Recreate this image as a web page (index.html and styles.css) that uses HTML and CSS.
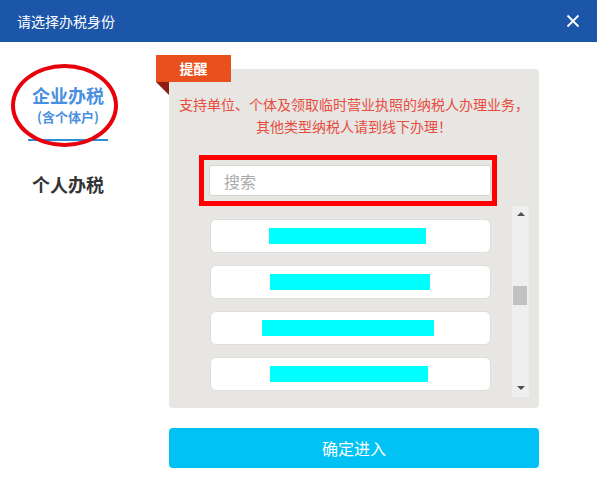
FILE: index.html
```html
<!DOCTYPE html>
<html lang="zh">
<head>
<meta charset="utf-8">
<title>请选择办税身份</title>
<link rel="stylesheet" href="styles.css">
</head>
<body>
<div class="dialog">
  <div class="header">
    <span class="title">请选择办税身份</span>
    <span class="close">
      <svg width="14" height="14" viewBox="0 0 14 14"><path d="M1.5 1.5 L12.5 12.5 M12.5 1.5 L1.5 12.5" stroke="#fff" stroke-width="1.8" fill="none"/></svg>
    </span>
  </div>
  <div class="main">
    <div class="nav">
      <div class="nav-item active">
        <div class="nav-title">企业办税</div>
        <div class="nav-sub">(含个体户)</div>
        <span class="ellipse"></span>
      </div>
      <div class="nav-item">
        <div class="nav-title dark">个人办税</div>
      </div>
    </div>
    <div class="content">
      <div class="panel">
        <div class="tag">提醒</div>
        <p class="notice">支持单位、个体及领取临时营业执照的纳税人办理业务，<br>其他类型纳税人请到线下办理！</p>
        <div class="search">
          <input class="search-input" type="text" placeholder="搜索">
        </div>
        <div class="list-wrap">
          <div class="list">
            <div class="item"><span class="bar" style="width:157px;margin-left:-6px"></span></div>
            <div class="item"><span class="bar" style="width:160px;margin-left:-1px"></span></div>
            <div class="item"><span class="bar" style="width:172px;margin-left:-5px"></span></div>
            <div class="item"><span class="bar" style="width:158px;margin-left:-3px"></span></div>
          </div>
          <div class="scrollbar">
            <span class="arrow up"></span>
            <span class="thumb"></span>
            <span class="arrow down"></span>
          </div>
        </div>
      </div>
      <button class="confirm">确定进入</button>
    </div>
  </div>
</div>
</body>
</html>
```
FILE: styles.css
```css
* { box-sizing: border-box; }
html, body {
  margin: 0;
  padding: 0;
  background: #fff;
  font-family: "Noto Sans CJK SC", "Liberation Sans", sans-serif;
}
.dialog {
  width: 597px;
  height: 494px;
  background: #fff;
}
.header {
  height: 42px;
  background: #1b56a8;
  display: flex;
  align-items: center;
  justify-content: space-between;
  padding: 0 17px 0 17px;
}
.title {
  color: #fff;
  font-size: 14px;
  line-height: 20px;
}
.close {
  display: flex;
  width: 14px;
  height: 14px;
}
.main {
  display: flex;
}
.nav {
  width: 136px;
  display: flex;
  flex-direction: column;
  align-items: center;
}
.nav-item {
  position: relative;
  width: 80px;
  text-align: center;
}
.nav-item.active {
  margin-top: 42px;
  padding-bottom: 13px;
  border-bottom: 2px solid #2a8fd6;
}
.nav-item + .nav-item {
  margin-top: 32px;
}
.nav-title {
  font-size: 18px;
  line-height: 22px;
  font-weight: bold;
  color: #4a8fe0;
}
.nav-title.dark {
  color: #333;
}
.nav-sub {
  font-size: 13px;
  line-height: 18px;
  margin-top: 2px;
  font-weight: bold;
  color: #4a8fe0;
}
.ellipse {
  position: absolute;
  left: -17px;
  top: -20px;
  width: 107px;
  height: 83px;
  border: 4px solid #e8000c;
  border-radius: 50%;
}
.content {
  margin-left: 33px;
  width: 370px;
  padding-top: 27px;
}
.panel {
  position: relative;
  background: #e7e6e3;
  border-radius: 4px;
  padding: 24px 10px 11px 40px;
  height: 339px;
}
.tag {
  position: absolute;
  left: -13px;
  top: -14px;
  width: 75px;
  height: 27px;
  background: #e8501e;
  color: #fff;
  font-size: 14px;
  font-weight: bold;
  line-height: 27px;
  text-align: center;
}
.tag::after {
  content: "";
  position: absolute;
  left: 0;
  top: 27px;
  width: 0;
  height: 0;
  border-top: 13px solid #8c1e14;
  border-left: 13px solid transparent;
}
.notice {
  margin: 0 0 0 -30px;
  color: #e84c3d;
  font-size: 14px;
  line-height: 22px;
  text-align: center;
}
.search {
  position: relative;
  margin-top: 28px;
  width: 282px;
}
.search::after {
  content: "";
  position: absolute;
  left: -10px;
  top: -10px;
  right: -6px;
  bottom: -10px;
  border: 5px solid #f00;
  pointer-events: none;
}
.search-input {
  display: block;
  width: 282px;
  height: 31px;
  border: 1px solid #d4d4d4;
  border-radius: 3px;
  background: #fff;
  padding: 0 14px;
  font-family: inherit;
  font-size: 16px;
  color: #333;
  outline: none;
}
.search-input::placeholder {
  color: #aaa;
}
.list-wrap {
  display: flex;
  margin-top: 10px;
  height: 191px;
}
.list {
  width: 281px;
  padding-top: 13px;
  margin-left: 1px;
  display: flex;
  flex-direction: column;
  gap: 12px;
}
.item {
  height: 34px;
  background: #fff;
  border: 1px solid #dedede;
  border-radius: 6px;
  display: flex;
  align-items: center;
  justify-content: center;
}
.bar {
  display: block;
  height: 16px;
  background: #00ffff;
}
.scrollbar {
  position: relative;
  margin-left: 21px;
  width: 17px;
  height: 191px;
  background: #efefef;
}
.arrow {
  position: absolute;
  left: 5px;
  width: 0;
  height: 0;
  border-left: 4px solid transparent;
  border-right: 4px solid transparent;
}
.arrow.up {
  top: 6px;
  border-bottom: 4px solid #505050;
}
.arrow.down {
  bottom: 7px;
  border-top: 4px solid #505050;
}
.thumb {
  position: absolute;
  left: 1px;
  top: 80px;
  width: 14px;
  height: 19px;
  background: #c1c1c1;
}
.confirm {
  display: block;
  margin-top: 20px;
  width: 370px;
  height: 40px;
  border: none;
  border-radius: 4px;
  background: #00c2f4;
  color: #fff;
  font-family: inherit;
  font-size: 16px;
  line-height: 40px;
  padding: 0;
}
```
